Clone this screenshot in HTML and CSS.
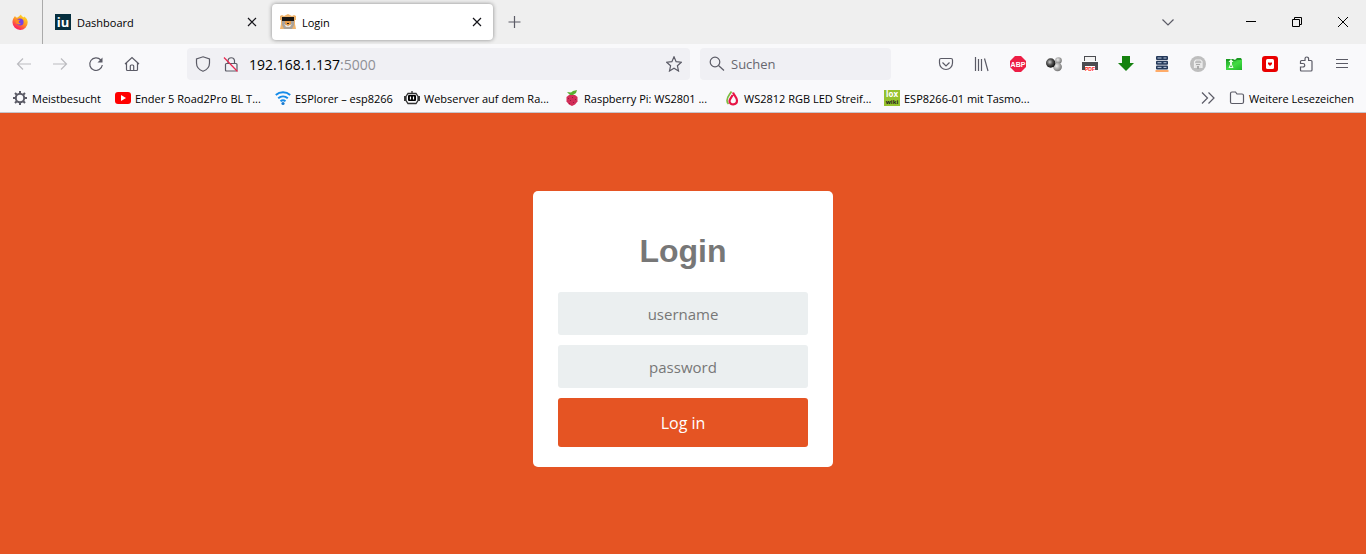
FILE: index.html
```html
<!DOCTYPE html>
<html lang="de">
<head>
<meta charset="utf-8">
<title>Login</title>
<meta name="viewport" content="width=device-width, initial-scale=1">
<link rel="stylesheet" href="styles.css">
</head>
<body>
<header class="browser">
  <div class="tabbar">
    <button class="pinned" aria-label="Firefox">
      <svg class="icon" viewBox="0 0 16 16">
        <defs>
          <linearGradient id="flame" x1="0.8" y1="0" x2="0.2" y2="1"><stop offset="0" stop-color="#ffe226"/><stop offset="0.45" stop-color="#ff9a22"/><stop offset="0.8" stop-color="#ff3750"/><stop offset="1" stop-color="#f5156c"/></linearGradient>
        </defs>
        <path fill="url(#flame)" d="M2 3.500 3 2l1 1.600 1.600-.2L9 .5c.3 1.500 1.500 2 2.600 3l.6-1C14.500 4 15.700 6 15.700 8.300A7.600 7.500 0 0 1 .5 8.500C.4 6.500 1 4.800 2 3.500z"/>
        <circle cx="8" cy="8" r="3.600" fill="#7542e5"/>
        <path fill="#ff8a24" d="M3.500 6c1.500-1 3-.6 4.500 0L6.800 7.600c-.3 1.200.7 2 2 1.600-.5 1.500-3.800 1.800-5-.5z"/>
      </svg>
    </button>
    <div class="tab">
      <svg class="icon" viewBox="0 0 16 16"><path fill="#062f3f" d="M0 0h16v16H0z"/><text class="iu" x="8" y="13" text-anchor="middle">iu</text></svg>
      <span class="tab-title">Dashboard</span>
      <button class="close" aria-label="Tab schließen"><svg class="icon line" viewBox="0 0 16 16"><path d="M4 4l8 8M12 4l-8 8"/></svg></button>
    </div>
    <div class="tab active">
      <svg class="icon" viewBox="0 0 16 16"><path fill="#efb46d" d="M0 2l2-1 2 1 4-2 4 2 2-1 2 1v4h-1v4l1 5H0l1-5V6H0z"/><path fill="#aaa29a" d="M2 7h12v4l-2 4H4l-2-4z"/><path fill="#171513" d="M2 3h12v4H2z"/><path fill="#e8e4de" d="M4 10l2 3h4l2-3-2 1H6z"/><path fill="#e69b48" d="M5 7h6v3l-3 2-3-2z"/><path fill="#222" d="M7 9h2v1H7z"/></svg>
      <span class="tab-title">Login</span>
      <button class="close" aria-label="Tab schließen"><svg class="icon line" viewBox="0 0 16 16"><path d="M4 4l8 8M12 4l-8 8"/></svg></button>
    </div>
    <button class="new-tab" aria-label="Neuer Tab"><svg class="icon line grey" viewBox="0 0 16 16"><path d="M7.500 2v12M1.500 8h12"/></svg></button>
    <button class="all-tabs" aria-label="Alle Tabs"><svg class="icon line grey" viewBox="0 0 16 16"><path d="M2.500 5.500 8 11l5.500-5.500"/></svg></button>
    <div class="window-buttons">
      <button aria-label="Minimieren"><svg class="icon line black" viewBox="0 0 16 16"><path d="M3 7.500h10"/></svg></button>
      <button aria-label="Verkleinern"><svg class="icon line black" viewBox="0 0 16 16"><path d="M3.500 5.500h7v7h-7zM5.500 5V3.500h7v7H11"/></svg></button>
      <button aria-label="Schließen"><svg class="icon line black" viewBox="0 0 16 16"><path d="M3 3l10 10M13 3 3 13"/></svg></button>
    </div>
  </div>

  <nav class="navbar">
    <button class="tool" aria-label="Zurück" disabled><svg class="icon line pale" viewBox="0 0 16 16"><path d="M15 8H1.500M7 2.500 1.500 8 7 13.500"/></svg></button>
    <button class="tool" aria-label="Vor" disabled><svg class="icon line pale" viewBox="0 0 16 16"><path d="M1 8h13.500M9 2.500 14.500 8 9 13.500"/></svg></button>
    <button class="tool" aria-label="Neu laden"><svg class="icon line grey" viewBox="0 0 16 16"><path d="M12.800 4A6.300 6.300 0 1 0 14.300 9"/><path class="solid" d="M14.500 1.500v5h-5z"/></svg></button>
    <button class="tool" aria-label="Startseite"><svg class="icon line grey" viewBox="0 0 16 16"><path d="M1 8l7-6.500L15 8M2.500 7v6.500q0 1 1 1h9q1 0 1-1V7M6.300 14.500V10q0-1 1-1h1.400q1 0 1 1v4.500"/></svg></button>
    <div class="urlbar">
      <svg class="icon line grey" viewBox="0 0 16 16"><path d="M8 .8 14.500 3v4c0 4-3 7-6.500 8.300C4.500 14 1.500 11 1.500 7V3z"/></svg>
      <svg class="icon line grey lock" viewBox="0 0 16 16"><path d="M5 7V4.500a3.300 3.300 0 0 1 6.500 0V7M3.500 7.500h9.500q1 0 1 1V14q0 1-1 1H3.500q-1 0-1-1V8.500q0-1 1-1z"/><path class="slash" d="M1 1.500 14.500 15.500"/></svg>
      <span class="address">192.168.1.137<span class="port">:5000</span></span>
      <button class="star" aria-label="Lesezeichen"><svg class="icon line grey" viewBox="0 0 16 16"><path d="M8 .8l2.100 4.900 5.200.5-3.900 3.500 1.100 5.300L8 12.300 3.500 15l1.100-5.300L.7 6.200l5.200-.5z"/></svg></button>
    </div>
    <label class="search">
      <svg class="icon line grey" viewBox="0 0 16 16"><circle cx="6" cy="6" r="4.800"/><path d="M9.500 9.500l5.500 5"/></svg>
      <input type="text" placeholder="Suchen" aria-label="Suchen">
    </label>
    <div class="tools">
      <button class="tool" aria-label="Pocket"><svg class="icon line grey" viewBox="0 0 16 16"><path d="M3 2.500h10q1.500 0 1.500 1.500v3a6.500 6.500 0 0 1-13 0V4q0-1.500 1.500-1.500zM4.500 6.500 8 10l3.500-3.500"/></svg></button>
      <button class="tool" aria-label="Bibliothek"><svg class="icon line grey" viewBox="0 0 16 16"><path d="M1.500 1v14M4.500 3v12M7.500 3v12M10.500 2.500 14 15"/></svg></button>
      <button class="tool" aria-label="Adblock Plus"><svg class="icon" viewBox="0 0 16 16"><path fill="#ed1e45" d="M5 0h6l5 5v6l-5 5H5l-5-5V5z"/><text class="abp" x="8" y="11" text-anchor="middle">ABP</text></svg></button>
      <button class="tool" aria-label="Erweiterung">
        <svg class="icon" viewBox="0 0 16 16"><defs><radialGradient id="dark" cx=".4" cy=".4" r=".6"><stop offset="0" stop-color="#ccc"/><stop offset=".5" stop-color="#555"/><stop offset="1" stop-color="#111"/></radialGradient><radialGradient id="light" cx=".4" cy=".4" r=".7"><stop offset="0" stop-color="#eee"/><stop offset="1" stop-color="#666"/></radialGradient></defs><circle cx="12.500" cy="4.500" r="3.300" fill="url(#light)"/><circle cx="11.500" cy="10.800" r="4.400" fill="url(#light)"/><circle cx="4.700" cy="7" r="4.700" fill="url(#dark)"/></svg>
      </button>
      <button class="tool" aria-label="PDF drucken"><svg class="icon" viewBox="0 0 16 16"><path fill="#4b4c50" d="M0 6h16v8H0zM2 0h12v5H2z"/><path fill="#f3f3f3" d="M3 1h10v4H3z"/><path fill="#fff" d="M3 10h10v6H3z"/><text class="pdf" x="8" y="15" text-anchor="middle">PDF</text></svg></button>
      <button class="tool" aria-label="Download"><svg class="icon" viewBox="0 0 16 16"><path fill="#15820f" d="M4 0h8v7h4l-8 8-8-8h4z"/></svg></button>
      <button class="tool" aria-label="Server"><svg class="icon" viewBox="0 0 16 16"><g fill="#24395a"><rect x="2" width="12" height="4" rx="1"/><rect x="2" y="4.700" width="12" height="4" rx="1"/><rect x="2" y="9.400" width="12" height="4" rx="1"/></g><path stroke="#b9c8dc" d="M3.500 2h4M9.500 2h3M3.500 6.700h4M9.500 6.700h3M3.500 11.400h4M9.500 11.400h3"/><path fill="#ffac69" d="M1.500 14h13v2h-13z"/></svg></button>
      <button class="tool" aria-label="Seite speichern"><svg class="icon" viewBox="0 0 16 16"><circle cx="8" cy="8" r="8" fill="#bebebe"/><path fill="#e6e6e6" d="M4 7h8v5H4z"/><path fill="none" stroke="#eee" stroke-width="1.200" d="M4.500 12V5.500L6 4h4.500l1.500 1.500V12"/><path fill="#aaa" d="M6 8h4v1H6zM7 10h2v3H7z"/></svg></button>
      <button class="tool" aria-label="Ordner"><svg class="icon" viewBox="0 0 16 16"><defs><linearGradient id="folder" x1="0" y1="0" x2="1" y2="1"><stop offset="0" stop-color="#22a52a"/><stop offset=".5" stop-color="#42dc43"/><stop offset="1" stop-color="#1fb628"/></linearGradient></defs><path fill="#1b9b22" d="M0 3h7l2 1 2-2h4l1 2v10H0z"/><path fill="url(#folder)" d="M0 5h9l2-1h5v9l-1 1H0z"/><path fill="#e9ffe9" d="M5 3l2.500 3H6v2.500l1.500 3.500h-5L4 8.500V6H2.500z"/><path fill="#35aa39" d="M5 9l1 2H4z"/></svg></button>
      <button class="tool" aria-label="Kartenerweiterung"><svg class="icon" viewBox="0 0 16 16"><rect width="16" height="16" rx="3" fill="#e90000"/><rect x="4" y="3" width="8" height="10" rx="1.500" fill="#fff"/><path fill="#e90000" d="M6 6.500h1.500l.5.500.5-.500H10V8l-2 2-2-2z"/></svg></button>
      <button class="tool" aria-label="Erweiterungen"><svg class="icon line grey" viewBox="0 0 16 16"><path d="M2.500 7V5.500q0-1 1-1H7V2.800a1.800 1.800 0 0 1 3.600 0v1.700h2.400q1 0 1 1v8.500q0 1-1 1H3.500q-1 0-1-1v-3H5a1.700 1.700 0 0 0 0-3.500H2.500z"/></svg></button>
      <button class="tool" aria-label="Menü"><svg class="icon line grey" viewBox="0 0 16 16"><path d="M2 3.500h12M2 7.500h12M2 11.500h12"/></svg></button>
    </div>
  </nav>

  <div class="bookmarks">
    <a class="bookmark short" href="#"><svg class="icon line grey" viewBox="0 0 16 16"><circle cx="8" cy="8" r="4.200" stroke-width="2"/><path stroke-width="2" d="M8 1v2.500M8 12.500V15M1 8h2.500M12.500 8H15M3 3l2 2M11 11l2 2M13 3l-2 2M5 11l-2 2"/></svg>Meistbesucht</a>
    <a class="bookmark" href="#"><svg class="icon" viewBox="0 0 16 16"><rect y="2" width="16" height="12" rx="3" fill="#f00"/><path fill="#fff" d="M6 5l5 3-5 3z"/></svg>Ender 5 Road2Pro BL T...</a>
    <a class="bookmark medium" href="#"><svg class="icon" viewBox="0 0 16 16"><g fill="none" stroke="#168be8" stroke-width="2"><path d="M.8 5a11 11 0 0 1 14.400 0"/><path d="M3.200 8.200a7.500 7.500 0 0 1 9.600 0"/><path d="M5.500 11.200a4 4 0 0 1 5 0"/></g><circle cx="8" cy="13.500" r="1.600" fill="#1679d0"/></svg>ESPlorer – esp8266</a>
    <a class="bookmark" href="#"><svg class="icon" viewBox="0 0 16 16"><path fill="none" stroke="#333" stroke-width="1.300" d="M4 3.500h8l2 3v4l-2 3H4l-2-3v-4zM8 3.500V1M.7 6v5M15.300 6v5"/><rect x="4" y="5" width="8" height="6" rx="1"/><path stroke="#fff" stroke-width="1.200" d="M6.500 6.500v3M9.500 6.500v3"/></svg>Webserver auf dem Ra...</a>
    <a class="bookmark" href="#"><svg class="icon" viewBox="0 0 16 16"><path fill="#d22d58" d="M2.500 7 5 5h6l2.500 2v4.500l-2.500 3-3 1.500-3-1.500-2.500-3z"/><path fill="#9b1840" d="M4 8h1v1H4zM8 7h1v1H8zM11 9h1v1h-1zM6 10h1v1H6zM9 12h1v1H9zM5 13h1v1H5z"/><path fill="#5aaf30" d="M3 2l4 .5L9 1l4-1-1 3-3 2H6z"/></svg>Raspberry Pi: WS2801 ...</a>
    <a class="bookmark" href="#"><svg class="icon" viewBox="0 0 16 16"><path fill="none" stroke="#7dbb42" stroke-width="1.700" d="M7.500 1.500C5 5.500 3 7 3 10.500q0 2 1.500 3.500"/><path fill="none" stroke="#e71546" stroke-width="2.200" d="M9 2.500c1 3 4 5 4 8 0 5-7.500 5-7.500.5C5.500 9 8 7 8.500 5"/></svg>WS2812 RGB LED Streif...</a>
    <a class="bookmark" href="#"><svg class="icon" viewBox="0 0 16 16"><path fill="#95c22d" d="M0 0h16v16H0z"/><text class="lox" x="8" y="7" text-anchor="middle">lox</text><text class="wiki" x="8" y="14" text-anchor="middle">wiki</text></svg>ESP8266-01 mit Tasmo...</a>
    <div class="overflow">
      <button aria-label="Weitere anzeigen"><svg class="icon line grey" viewBox="0 0 16 16"><path d="M2 2.500 7.500 8 2 13.500M8.500 2.500 14 8l-5.500 5.500"/></svg></button>
      <a class="folder" href="#"><svg class="icon line grey" viewBox="0 0 16 16"><path d="M3 2h3.500L8 4h5q1.500 0 1.500 1.500V12q0 1.500-1.500 1.500H3q-1.500 0-1.500-1.500V3.500Q1.500 2 3 2z"/></svg>Weitere Lesezeichen</a>
    </div>
  </div>
</header>

<main class="page">
  <form class="card">
    <h1>Login</h1>
    <input class="field" type="text" placeholder="username" aria-label="username">
    <input class="field" type="password" placeholder="password" aria-label="password">
    <button class="submit" type="button">Log in</button>
  </form>
</main>
</body>
</html>
```
FILE: styles.css
```css
* { box-sizing: border-box; }
body {
  margin: 0;
  min-height: 100vh;
  display: flex;
  flex-direction: column;
  background: #e55423;
  color: #000;
  font-family: "Open Sans", "Noto Sans", sans-serif;
  font-size: 11px;
}
button {
  display: flex;
  align-items: center;
  justify-content: center;
  margin: 0;
  padding: 0;
  border: 0;
  background: none;
  font: inherit;
}
a { color: inherit; text-decoration: none; }
input { font-family: inherit; }
.icon { display: block; width: 16px; height: 16px; flex: none; }
.line { fill: none; stroke: #15141a; stroke-width: 1.2; }
.grey { stroke: #5b5b66; }
.pale { stroke: #bcbcc0; }
.black { stroke: #000; stroke-width: 1; }
.solid { fill: #5b5b66; stroke: none; }
.slash { stroke: #e8274f; }
.iu { fill: #fff; font: bold 13px "Open Sans", sans-serif; }
.abp { fill: #fff; font: bold 7px "Liberation Sans", sans-serif; }
.pdf { fill: #f22; font: bold 5px "Liberation Sans", sans-serif; }
.lox { fill: #fff; font: bold 8px/8px "Open Sans", sans-serif; }
.wiki { fill: #222; font: bold 6px/6px "Open Sans", sans-serif; }

.browser { background: #f9f9fb; border-bottom: 1px solid #c5c5cc; }
.tabbar { display: flex; align-items: center; height: 44px; background: #efefef; }
.pinned { width: 43px; height: 44px; padding-right: 3px; border-right: 1px solid #aaa; }
.tab {
  display: flex;
  align-items: center;
  gap: 6px;
  width: 221px;
  height: 36px;
  margin-left: 4px;
  padding: 0 8px;
  border-radius: 4px;
}
.tab.active { background: #fff; box-shadow: 0 0 4px #888; }
.tab-title { flex: 1; }
.new-tab { width: 36px; height: 36px; margin-left: 4px; }
.all-tabs { width: 36px; height: 36px; margin-left: auto; }
.window-buttons { display: flex; margin-left: 42px; }
.window-buttons button { width: 46px; height: 44px; }

.navbar { display: flex; align-items: center; height: 40px; padding: 0 6px; }
.tool { width: 36px; height: 32px; }
.urlbar {
  display: flex;
  flex: 1;
  align-items: center;
  height: 32px;
  margin: 0 10px 0 37px;
  padding: 0 8px;
  border-radius: 4px;
  background: #f0f0f4;
  font-size: 14px;
}
.lock { margin: 0 10px 0 12px; }
.address { flex: 1; }
.port { color: #8f8f96; }
.search {
  display: flex;
  align-items: center;
  gap: 6px;
  width: 191px;
  height: 32px;
  padding: 0 9px;
  border-radius: 4px;
  background: #f0f0f4;
}
.search input {
  flex: 1;
  min-width: 0;
  padding: 0;
  border: 0;
  background: none;
  font-size: 13px;
}
.search input::placeholder { color: #67676f; opacity: 1; }
.tools { display: flex; margin-left: 37px; }

.bookmarks { display: flex; align-items: center; height: 28px; padding: 0 12px; white-space: nowrap; }
.bookmark, .folder { display: flex; align-items: center; gap: 4px; }
.bookmark { width: 160px; }
.short { width: 103px; }
.medium { width: 129px; }
.overflow { display: flex; align-items: center; gap: 13px; margin-left: auto; }

.page { display: flex; flex: 1; justify-content: center; align-items: flex-start; padding: 78px 0; }
.card {
  display: flex;
  flex-direction: column;
  gap: 10px;
  width: 300px;
  padding: 20px 25px;
  border-radius: 5px;
  background: #fff;
}
.card h1 {
  margin: 21px 0 11px;
  color: #777;
  font: bold 32px/39px "Liberation Sans", Arial, sans-serif;
  text-align: center;
}
.field {
  width: 100%;
  height: 43px;
  padding: 0 10px;
  border: 0;
  border-radius: 3px;
  background: #ebeff0;
  font-size: 15px;
  text-align: center;
}
.field::placeholder { color: #777; opacity: 1; }
.submit {
  height: 49px;
  border-radius: 3px;
  background: #e55423;
  color: #fff;
  font-size: 16px;
}
```
